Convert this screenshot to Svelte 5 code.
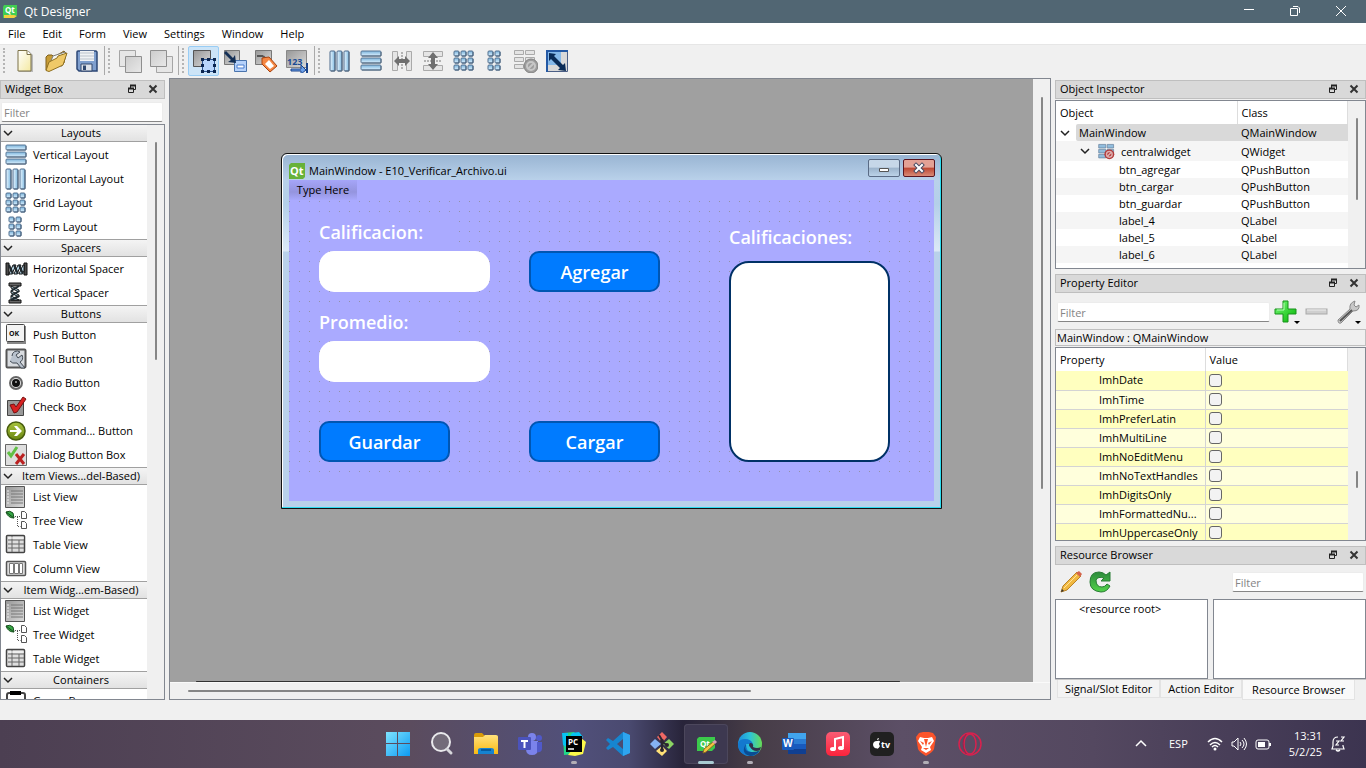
<script>
  const menus = ['File', 'Edit', 'Form', 'View', 'Settings', 'Window', 'Help'];

  const toolGroups = [
    [['new', 'New'], ['open', 'Open'], ['save', 'Save']],
    [['front', 'Bring to Front'], ['back', 'Send to Back']],
    [['widgets', 'Edit Widgets'], ['signals', 'Edit Signals/Slots'], ['buddies', 'Edit Buddies'], ['taborder', 'Edit Tab Order']],
    [['hlayout', 'Lay Out Horizontally'], ['vlayout', 'Lay Out Vertically'], ['hsplit', 'Horizontal Splitter'], ['vsplit', 'Vertical Splitter'],
     ['grid', 'Lay Out in a Grid'], ['form', 'Lay Out in a Form'], ['breaklayout', 'Break Layout'], ['adjust', 'Adjust Size']]
  ];

  const categories = [
    { name: 'Layouts', items: [['vlayout', 'Vertical Layout'], ['hlayout', 'Horizontal Layout'], ['grid', 'Grid Layout'], ['form', 'Form Layout']] },
    { name: 'Spacers', items: [['hspacer', 'Horizontal Spacer'], ['vspacer', 'Vertical Spacer']] },
    { name: 'Buttons', items: [['push', 'Push Button'], ['tool', 'Tool Button'], ['radio', 'Radio Button'], ['check', 'Check Box'], ['command', 'Command... Button'], ['dialog', 'Dialog Button Box']] },
    { name: 'Item Views...del-Based)', items: [['list', 'List View'], ['tree', 'Tree View'], ['table', 'Table View'], ['column', 'Column View']] },
    { name: 'Item Widg...em-Based)', items: [['list', 'List Widget'], ['tree', 'Tree Widget'], ['table', 'Table Widget']] },
    { name: 'Containers', items: [['group', 'Group Box']] }
  ];

  const objects = [
    ['btn_agregar', 'QPushButton'], ['btn_cargar', 'QPushButton'], ['btn_guardar', 'QPushButton'],
    ['label_4', 'QLabel'], ['label_5', 'QLabel'], ['label_6', 'QLabel'], ['txt_calificacion', 'QLineEdit']
  ];

  const properties = ['ImhDate', 'ImhTime', 'ImhPreferLatin', 'ImhMultiLine', 'ImhNoEditMenu', 'ImhNoTextHandles', 'ImhDigitsOnly', 'ImhFormattedNu...', 'ImhUppercaseOnly'];

  const apps = [
    ['windows', 'Start'], ['search', 'Search'], ['explorer', 'File Explorer'], ['teams', 'Teams'],
    ['pycharm', 'PyCharm', 'running'], ['vscode', 'VS Code'], ['git', 'Git'], ['designer', 'Qt Designer', 'current'],
    ['edge', 'Edge', 'running'], ['word', 'Word'], ['music', 'Music'], ['appletv', 'Apple TV'],
    ['brave', 'Brave', 'running'], ['opera', 'Opera GX']
  ];
</script>

{#snippet toolIcon(name)}
  <svg class="ico" viewBox="0 0 24 24" aria-hidden="true">
    {#if name === 'new'}
      <path d="M6 2h10l4 4v17H6z" fill="#b9b9b9" /><path d="M5 1.5h9l4 4V22H5z" fill="url(#paper)" stroke="#7b7146" />
      <path d="M14 1.5v4h4" fill="#fff" stroke="#7b7146" />
    {:else if name === 'open'}
      <path d="M2 21V8l2-2h4l2 2 10-6 2 2-2 10z" fill="#c79c36" stroke="#80601c" />
      <path d="M5 17 9 7l12-4 1 3-4 11z" fill="#f6f6f4" stroke="#7f7f78" />
      <path d="M2 21.5 5 13l8-4 1-2 9-3-4 12L5 22.5z" fill="#efc968" stroke="#90701f" />
    {:else if name === 'save'}
      <path d="M2 3q0-1 1-1h18l1 1v19H4l-2-2z" fill="#7f9fce" stroke="#2c4775" stroke-width="1.5" />
      <path d="M5 2h14v10H5z" fill="#f0f2f5" /><path d="M5 4h14M5 7h14M5 10h14" stroke="#bcc3cc" />
      <path d="M6 15h11v7H6z" fill="#dfe3ea" stroke="#32496f" /><path d="M8 16.500h3V21H8z" fill="#30486f" />
    {:else if name === 'front' || name === 'back'}
      <path d={name === 'front' ? 'M1.500 1.500h16v16h-16z' : 'M7.500 7.500h16v16h-16z'} fill="#e6e6e6" stroke="#a5a5a5" />
      <path d={name === 'front' ? 'M7.500 7.500h16v16h-16z' : 'M1.500 1.500h16v16h-16z'} fill="url(#grey)" stroke="#8f8f8f" />
    {:else if name === 'widgets'}
      <path d="M1.500 1.500h17v16h-17z" fill="url(#dgrey)" stroke="#555" /><path d="M10.500 10.500h12v12h-12z" fill="#b8d5fb" stroke="#2d5590" />
      <g fill="#0b254f"><path d="M9 9h3v3H9zM15 9h3v3h-3zM21 9h3v3h-3zM9 15h3v3H9zM21 15h3v3h-3zM9 21h3v3H9zM15 21h3v3h-3zM21 21h3v3h-3z" /></g>
    {:else if name === 'signals'}
      <path d="M1.500 1.500h15v14h-15z" fill="url(#dgrey)" stroke="#777" /><path d="M11.500 11.500h12v11h-12z" fill="#b5d1fa" stroke="#4a74ad" />
      <path d="M14 16h7v3h-7z" fill="#fff" stroke="#4a7ed0" /><path d="m1 4 2-2 7 7 2-3 1 8-8-1 3-2z" fill="#142f55" />
    {:else if name === 'buddies'}
      <path d="M1.500 1.500h16v14h-16z" fill="url(#dgrey)" stroke="#777" /><path d="M3 7h6m0 0 4 4" stroke="#555" stroke-width="2" />
      <path d="m8 9 7-1 8 9-7 6-8-8z" fill="#f58743" stroke="#a8420f" /><path d="m15 11 5 6-4 3-5-5z" fill="#fff" />
    {:else if name === 'taborder'}
      <path d="M1.500 1.500h20v17h-20z" fill="url(#dgrey)" stroke="#888" /><text x="2" y="16" class="num">123</text>
      <path d="M6 20h10v-4l5 5-5 4v-3H6z" fill="#6da1e9" stroke="#1a438a" /><path d="M22 14v10" stroke="#1a438a" stroke-width="2" />
    {:else if name === 'hlayout'}
      {#each [2, 9, 16] as x}<rect {x} y="2" width="5" height="20" rx="1" fill="url(#blueh)" stroke="#4c6a8d" /><path d="M{x + 5} 3v19h-4" fill="none" stroke="#52677c" />{/each}
    {:else if name === 'vlayout'}
      {#each [2, 9, 16] as y}<rect x="2" {y} width="20" height="5" rx="1" fill="url(#blue)" stroke="#5b7896" /><path d="M3 {y + 5}h19v-4" fill="none" stroke="#52677c" />{/each}
    {:else if name === 'grid' || name === 'form'}
      {#each (name === 'grid' ? [2, 9, 16] : [5, 12]) as x}{#each [2, 9, 16] as y}
        <rect {x} {y} width="5" height="5" rx="1" fill="url(#blue)" stroke="#52708f" /><path d="M{x + 1} {y + 5}h4v-4" fill="none" stroke="#455f7a" />
      {/each}{/each}
    {:else if name === 'hsplit'}
      <path d="M2.500 2.500h5v19h-5zM16.500 2.500h5v19h-5z" fill="#e5e5e5" stroke="#aaa" /><path d="M12 3v18" stroke="#777" stroke-dasharray="2 1" />
      <path d="m4 12 5-5v3h6V7l5 5-5 5v-3H9v3z" fill="#6f6f6f" />
    {:else if name === 'vsplit'}
      <path d="M2.500 2.500h19v5h-19zM2.500 16.500h19v5h-19z" fill="#e5e5e5" stroke="#aaa" /><path d="M3 12h18" stroke="#777" stroke-dasharray="2 1" />
      <path d="m12 3 5 6h-3v6h3l-5 6-5-6h3V9H7z" fill="#6f6f6f" />
    {:else if name === 'breaklayout'}
      {#each [1, 8, 15] as y}<path d="M.5 {y}.500h9v4h-9zM11.500 {y}.500h9v4h-9z" fill="#e4e4e4" stroke="#aaa" />{/each}
      <circle cx="17" cy="17" r="7" fill="#9d9d9d" stroke="#828282" /><circle cx="17" cy="17" r="4" fill="none" stroke="#c7c7c7" stroke-width="2" /><path d="m14 20 6-6" stroke="#c7c7c7" stroke-width="2" />
    {:else if name === 'adjust'}
      <path d="M1.500 1.500h21v21h-21z" fill="#d9d9d9" stroke="#4b5f86" /><path d="M2 2h14v14H2z" fill="#85b9ea" /><path d="M1 1h22v2H1zM1 1h2v22H1z" fill="#2459a4" />
      <path d="m4 4 7 1-2 2 9 9 2-2 1 8-8-1 2-2-9-9-2 2z" fill="#092b57" />
    {:else if name === 'hspacer'}
      <path d="M2 6h3v12H2zM20 6h3v12h-3z" fill="#4b4b4b" stroke="#111" /><path d="m5 17 4-9h3L8 17zm5 0 4-9h3l-4 9zm5 0 4-9h1v6l-2 3z" fill="#b8d8e8" stroke="#111" />
      <path d="m5 8 4 9m1-9 4 9m1-9 4 9" stroke="#202a30" stroke-width="2" />
    {:else if name === 'vspacer'}
      <path d="M5 2h12v3H5zM5 19h12v3H5z" fill="#666" stroke="#111" /><path d="m7 5 8 4v2L7 7zm0 5 8 4v2l-8-4zm0 5 8 4H7z" fill="#b8d8e8" stroke="#111" />
      <path d="m15 5-8 5m8 0-8 5m8 0-8 4" stroke="#202a30" stroke-width="2" />
    {:else if name === 'push'}
      <path d="M3 3h19v18H3z" fill="#888" /><rect x="2.500" y="1.500" width="18" height="17" rx="1" fill="#f3f3f3" stroke="#444" /><text x="5" y="13" class="ok">OK</text>
    {:else if name === 'tool'}
      <rect x="2.500" y="2.500" width="19" height="18" rx="1" fill="#d9dce0" stroke="#555" stroke-width="2" />
      <path d="M8 9a5 5 0 0 1 8-4l-4 3 2 3 4-3q2 5-2 7l5 6h-4l-4-5q-5 1-7-2" fill="#b9c2cd" stroke="#444c55" />
    {:else if name === 'radio'}
      <circle cx="12" cy="12" r="6" fill="#e2e2e2" stroke="#666" stroke-width="2" /><circle cx="12" cy="12" r="4" fill="#111" /><path d="M11 10h2v2h-2z" fill="#888" />
    {:else if name === 'check'}
      <path d="M3.500 5.500h16v15h-16z" fill="#999" stroke="#444" /><path d="m6 10 4-1 2 3 7-10 3 2-9 13-3 1z" fill="#d82222" stroke="#771111" />
    {:else if name === 'command'}
      <circle cx="12" cy="12" r="9" fill="url(#olive)" stroke="#485d0d" stroke-width="1.500" /><path d="M6 11h7l-3-4h3l5 5-5 5h-3l3-4H6z" fill="#fff" />
    {:else if name === 'dialog'}
      <path d="M1.500 1.500h21v21h-21z" fill="#dedede" stroke="#666" /><path d="m4 9 3 4 6-9" fill="none" stroke="#61bf45" stroke-width="3" />
      <path d="m12 11 8 10m0-10-8 10" stroke="#bb2222" stroke-width="3" />
    {:else if name === 'list'}
      <path d="M1.500 1.500h19v21h-19z" fill="url(#dgrey)" stroke="#555" /><path d="M7 6h12M7 9h12M7 12h12M7 15h12M7 18h12" stroke="#777" /><path d="M3 6h2M3 9h2M3 12h2M3 15h2M3 18h2" stroke="#eee" />
    {:else if name === 'tree'}
      <path d="M2 3q4-2 7 1l1 5q-6 0-8-6z" fill="#36a845" stroke="#174e1d" /><path d="m2 3 8 6" stroke="#174e1d" /><path d="M11 7.500h5M13.500 8v9.500h3" fill="none" stroke="#555" stroke-dasharray="1 1" />
      <path d="M17.500 2.500h3l2 2v5h-5zM17.500 12.500h3l2 2v5h-5z" fill="#fff" stroke="#555" />
    {:else if name === 'table'}
      <rect x="2.500" y="2.500" width="18" height="17" rx="1" fill="#dedede" stroke="#444" stroke-width="1.500" /><path d="M4 7h16M4 11h16M4 15h16M8 3v16M15 7v12" stroke="#666" /><path d="M4 5h16" stroke="#fff" />
    {:else if name === 'column'}
      <rect x="2.500" y="4.500" width="19" height="14" rx="1" fill="#ddd" stroke="#555" stroke-width="1.500" /><path d="M5.500 6.500h4v10h-4zM10.500 6.500h4v10h-4zM15.500 6.500h3v10h-3z" fill="#fff" stroke="#777" />
    {:else if name === 'group'}
      <rect x="3" y="4" width="18" height="18" rx="2" fill="#fff" stroke="#444" stroke-width="2" /><path d="M6 2h11v4H6z" fill="#000" />
    {:else if name === 'broken'}
      <path d="M1 2h10v5H1zM13 2h9v5h-9zM1 9h10v5H1zM13 9h9v5h-9zM1 16h10v5H1z" fill="#91bddd" stroke="#657f9c" />
      <circle cx="16" cy="16" r="7" fill="#b33b3b" /><circle cx="16" cy="16" r="4" fill="none" stroke="#deb0b0" stroke-width="2" /><path d="m13 19 6-6" stroke="#deb0b0" stroke-width="2" />
    {:else if name === 'plus'}
      <path d="M9 1h5v8h8v5h-8v8H9v-8H1V9h8z" fill="url(#green)" stroke="#17921b" /><path d="M10 3v7H3" fill="none" stroke="#b2ffb2" />
    {:else if name === 'minus'}
      <rect x="1" y="9" width="21" height="5" fill="#cfcfcf" stroke="#a9a9a9" /><path d="M2 10h19" stroke="#eee" />
    {:else if name === 'wrench'}
      <path d="M2 20 14 9q-1-6 5-8l-1 4 2 2 3-2q1 6-6 6L5 23q-3 1-3-3z" fill="#c8c8c8" stroke="#888" /><path d="m4 21 12-11" stroke="#555" stroke-width="2" />
    {:else if name === 'pencil'}
      <path d="m2 22 2-6L18 2l4 4L8 20z" fill="#f1b83f" stroke="#b98228" /><path d="m17 3 3-2 3 3-2 3z" fill="#d4644d" /><path d="m2 22 1-3 2 2z" fill="#333" /><path d="m5 18L18 5" stroke="#ffe39b" />
    {:else if name === 'reload'}
      <path d="M22 2v9h-9l3-3q-6-2-8 2 0 7 6 7 3 0 5-3l3 2q-3 6-9 6-11-1-11-10Q2 2 11 2q4 0 7 3z" fill="url(#green2)" stroke="#287c34" />
    {/if}
  </svg>
{/snippet}

{#snippet appIcon(name)}
  <svg class="app-ico" viewBox="0 0 24 24" aria-hidden="true">
    {#if name === 'windows'}
      <path d="M0 0h11v11H0zM12 0h12v11H12zM0 12h11v12H0zM12 12h12v12H12z" fill="url(#win)" />
    {:else if name === 'search'}
      <circle cx="11" cy="10" r="9" fill="#736b79" stroke="#e9e9ec" stroke-width="2" /><path d="m17 17 4 4" stroke="#d7d7db" stroke-width="3" stroke-linecap="round" />
    {:else if name === 'explorer'}
      <path d="M0 3q0-2 2-2h6l3 3h13v9H0z" fill="#d99b08" /><path d="M0 5h9l2-2h11q2 0 2 2v17H0z" fill="url(#folder)" /><path d="M4 22v-4q0-2 3-2h10q3 0 3 2v4z" fill="#1683cf" /><path d="M7 18h10" stroke="#075b9e" stroke-width="2" />
    {:else if name === 'teams'}
      <circle cx="14" cy="5" r="4" fill="#7b83eb" /><circle cx="21" cy="6" r="3" fill="#5059c9" /><path d="M8 9h12v8q0 6-6 6t-6-6z" fill="#7b83eb" /><path d="M19 10h5v7q-1 4-5 3z" fill="#5059c9" />
      <rect y="5" width="13" height="13" rx="1" fill="#4b53bc" /><path d="M3 9h7M6.500 9v7" stroke="#fff" stroke-width="2" />
    {:else if name === 'pycharm'}
      <path d="m1 1 11-1 5 5-4 17-11 1z" fill="#21d789" /><path d="m10 1 7-1 4 5-3 3-10-3z" fill="#07c3f2" /><path d="m19 6 5 4-3 12-8 2-7-1 6-8z" fill="#fcf84a" /><path d="m0 1 6 0v15l-5-3z" fill="#07c3f2" />
      <path d="M4 4h16v16H4z" fill="#000" /><text x="6" y="13" class="pc">PC</text><path d="M6 17h6" stroke="#fff" stroke-width="1.500" />
    {:else if name === 'vscode'}
      <path d="M17 0 7 9 2 6 0 8l4 4-4 4 2 2 5-3 10 9 7-3V3zM17 7v10l-6-5z" fill="#1685cf" fill-rule="evenodd" /><path d="m17 0 7 3v18l-7 3z" fill="#2ea5ef" />
    {:else if name === 'git'}
      <path d="m12 0 5 5-5 6-5-6z" fill="#ef6864" /><path d="m19 7 5 5-5 5-6-5z" fill="#8bd463" /><path d="m12 14 5 5-5 5-6-5z" fill="#ffe177" /><path d="m5 7 6 5-6 5-5-5z" fill="#85b2f3" />
      <path d="m9 3 3 5v11m0-9 5 3" fill="none" stroke="#2a2630" stroke-width="2" /><circle cx="12" cy="9" r="2" fill="#2a2630" /><circle cx="12" cy="18" r="2" fill="#2a2630" /><circle cx="17" cy="13" r="2" fill="#2a2630" />
    {:else if name === 'designer'}
      <path d="M5 5h16v11l-3 3H3V7z" fill="#3bca4b" /><text x="6" y="15" class="qt">Qt</text><path d="m9 21 1-4 9-7 2 2-9 8z" fill="#f5c442" stroke="#8a6b24" /><path d="m18 10 3-2 2 2-2 2z" fill="#d9a2b4" />
    {:else if name === 'edge'}
      <circle cx="12" cy="12" r="12" fill="url(#edge1)" /><path d="M0 12Q1 7 7 7t8 5H8q0 7 5 8t9-1Q18 24 12 24 0 23 0 12z" fill="#1379cf" /><path d="M8 12q-3 9 7 8 4 0 7-2-4 6-10 6Q2 21 8 12z" fill="#0b4c91" /><path d="M12 15q-2-2 0-4 4 0 3 4 4 2 8 0l-1 3q-6 3-10-3z" fill="#32304b" />
    {:else if name === 'word'}
      <path d="M6 1h18v6H6z" fill="#41a5ee" /><path d="M6 7h18v5H6z" fill="#2b7cd3" /><path d="M6 12h18v5H6z" fill="#185abd" /><path d="M6 17h18v5H6z" fill="#103f91" /><rect y="6" width="12" height="12" rx="1" fill="#185abd" /><text x="1" y="15" class="word">W</text>
    {:else if name === 'music'}
      <rect width="24" height="24" rx="5" fill="url(#music)" /><path d="M9 17V7l8-2v10" fill="none" stroke="#fff" stroke-width="2" /><ellipse cx="7" cy="17" rx="3" ry="2" fill="#fff" /><ellipse cx="15" cy="16" rx="3" ry="2" fill="#fff" />
    {:else if name === 'appletv'}
      <rect width="24" height="24" rx="5" fill="#202020" /><path d="M7 9q3-1 3 1-2 2 0 4-2 4-4 2-2 1-3-3 0-4 4-4zM7 8q0-2 2-2 0 2-2 2z" fill="#fff" /><text x="11" y="16" class="tv">tv</text>
    {:else if name === 'brave'}
      <path d="m5 1 4-1h6l4 1 3 4-2 12q-1 3-8 7-7-4-8-7L2 5z" fill="#fb542b" /><path d="m6 5 4 1h4l4-1 2 4-4 6 1 3-5 3-5-3 1-3-4-6z" fill="#fff" /><path d="m6 9 4 2-1 2zm12 0-4 2 1 2zM10 7h4l-2 8zM9 16h6l-3 2z" fill="#fb542b" />
    {:else if name === 'opera'}
      <circle cx="12" cy="12" r="11" fill="none" stroke="#d9214e" stroke-width="1.500" /><ellipse cx="12" cy="12" rx="6" ry="10" fill="none" stroke="#d9214e" stroke-width="1.500" /><path d="M8 2q-6 9 0 20" fill="none" stroke="#a51d49" />
    {/if}
  </svg>
{/snippet}

{#snippet dockTitle(title)}
  <header class="dock-title">
    <h2>{title}</h2>
    <button aria-label="Float {title}"><svg viewBox="0 0 10 10"><path d="M3.500 4V1.500h5v4H7M1.500 4.500h5v4h-5z" fill="none" stroke="#222" /><path d="M3 1.500h6M1 4.500h6" stroke="#222" stroke-width="2" /></svg></button>
    <button aria-label="Close {title}"><svg viewBox="0 0 10 10"><path d="m1.500 1.500 7 7m0-7-7 7" stroke="#333" stroke-width="2" /></svg></button>
  </header>
{/snippet}

{#snippet chevron()}
  <svg class="chevron" viewBox="0 0 10 10" aria-hidden="true"><path d="m1 3 4 4 4-4" fill="none" stroke="#222" stroke-width="1.500" /></svg>
{/snippet}

<svg class="defs" aria-hidden="true">
  <defs>
    <linearGradient id="paper" x2="1" y2="1"><stop stop-color="#fff" /><stop offset="1" stop-color="#f4e9a0" /></linearGradient>
    <linearGradient id="grey" x2="1" y2="1"><stop stop-color="#ccc" /><stop offset="1" stop-color="#e8e8e8" /></linearGradient>
    <linearGradient id="dgrey" x2="1" y2="1"><stop stop-color="#979797" /><stop offset="1" stop-color="#dadada" /></linearGradient>
    <linearGradient id="blue" x2="0" y2="1"><stop stop-color="#7ab3db" /><stop offset="1" stop-color="#def2ff" /></linearGradient>
    <linearGradient id="blueh" x2="1" y2="0"><stop stop-color="#eaf7ff" /><stop offset="1" stop-color="#7db8e0" /></linearGradient>
    <linearGradient id="olive" x2="0" y2="1"><stop stop-color="#a8c43f" /><stop offset="1" stop-color="#6b8512" /></linearGradient>
    <linearGradient id="green" x2="1" y2="1"><stop stop-color="#7dfb7d" /><stop offset="1" stop-color="#00b400" /></linearGradient>
    <linearGradient id="green2" x2="0" y2="1"><stop stop-color="#2c8a3c" /><stop offset="1" stop-color="#53d34b" /></linearGradient>
    <linearGradient id="win" x2="1" y2="1"><stop stop-color="#7fe4ff" /><stop offset="1" stop-color="#0c9af2" /></linearGradient>
    <linearGradient id="folder" x2="0" y2="1"><stop stop-color="#ffe17c" /><stop offset="1" stop-color="#f9b912" /></linearGradient>
    <linearGradient id="edge1" x2="1" y2="0"><stop stop-color="#1d8fdc" /><stop offset=".5" stop-color="#2dc3d8" /><stop offset="1" stop-color="#66dd54" /></linearGradient>
    <linearGradient id="music" x2="0" y2="1"><stop stop-color="#fb5c74" /><stop offset="1" stop-color="#fa233b" /></linearGradient>
  </defs>
</svg>

<div class="screen">
  <header class="titlebar">
    <svg class="qt-logo" viewBox="0 0 16 14" aria-hidden="true"><path d="M2 0h13v10l-3 3H1V2z" fill="#41cd52" /><text x="3" y="8" class="qt">Qt</text><path d="M2 10h10l3 1-3 2H2z" fill="#f3cf3d" /></svg>
    <h1>Qt Designer</h1>
    <div class="win-controls">
      <button aria-label="Minimize"><svg viewBox="0 0 12 12"><path d="M1 4.500h10" stroke="#fff" /></svg></button>
      <button aria-label="Restore"><svg viewBox="0 0 12 12"><path d="M1.500 3.500h7v7h-7zM4 1.500h5l1.500 1.500v5" fill="none" stroke="#fff" /></svg></button>
      <button aria-label="Close"><svg viewBox="0 0 12 12"><path d="m1 1 10 10m0-10L1 11" stroke="#fff" /></svg></button>
    </div>
  </header>

  <nav class="menubar">{#each menus as m}<button>{m}</button>{/each}</nav>

  <div class="toolbar">
    {#each toolGroups as group}
      <div class="tool-group">
        {#each group as [id, label]}
          <button aria-label={label} class:active={id === 'widgets'}>{@render toolIcon(id)}</button>
        {/each}
      </div>
    {/each}
  </div>

  <main>
    <aside class="dock left">
      {@render dockTitle('Widget Box')}
      <input class="filter" placeholder="Filter" aria-label="Filter widgets" />
      <div class="frame">
        <div class="widget-list">
          {#each categories as c}
            <h3>{@render chevron()}<span>{c.name}</span></h3>
            <ul>{#each c.items as [id, label]}<li>{@render toolIcon(id)}{label}</li>{/each}</ul>
          {/each}
        </div>
        <div class="vbar"><i style="top: 3%; height: 38%"></i></div>
      </div>
    </aside>

    <section class="workspace">
      <div class="mdi">
        <article class="form-window">
          <header>
            <svg viewBox="0 0 16 16" aria-hidden="true"><path d="M2 0h14v14l-2 2H0V2z" fill="#67b239" /><text x="1" y="12" class="qt big">Qt</text></svg>
            <h2>MainWindow - E10_Verificar_Archivo.ui</h2>
            <button class="min" aria-label="Minimize form"><svg viewBox="0 0 14 12"><path d="M2.500 6.500h9v3h-9z" fill="#fff" stroke="#555" /></svg></button>
            <button class="close" aria-label="Close form"><svg viewBox="0 0 14 12"><path d="m4 3 6 6m0-6L4 9" stroke="#4b4b61" stroke-width="4" stroke-linecap="square" /><path d="m4 3 6 6m0-6L4 9" stroke="#fff" stroke-width="2" stroke-linecap="square" /></svg></button>
          </header>
          <div class="canvas">
            <button class="type-here">Type Here</button>
            <svg class="dots" aria-hidden="true"><defs><pattern id="dot" width="10" height="10" patternUnits="userSpaceOnUse"><rect width="1" height="1" fill="#9292a8" /></pattern></defs><rect width="100%" height="100%" fill="url(#dot)" /></svg>
            <label class="w l1" for="calificacion">Calificacion:</label>
            <input class="w i1" id="calificacion" />
            <label class="w l2" for="promedio">Promedio:</label>
            <input class="w i2" id="promedio" />
            <button class="w b1">Agregar</button>
            <button class="w b2">Guardar</button>
            <button class="w b3">Cargar</button>
            <label class="w l3" for="lista">Calificaciones:</label>
            <textarea class="w list" id="lista"></textarea>
          </div>
        </article>
        <div class="next-window"></div>
      </div>
      <div class="vbar"><i style="top: 3%; height: 65%"></i></div>
      <div class="hbar"><i></i></div>
    </section>

    <div class="right">
      <aside class="dock inspector">
        {@render dockTitle('Object Inspector')}
        <div class="frame">
          <div class="scroll">
            <table class="objects">
              <colgroup><col class="c1" /><col /></colgroup>
              <thead><tr><th>Object</th><th>Class</th></tr></thead>
              <tbody>
                <tr class="root"><td><div>{@render chevron()}<span>MainWindow</span></div></td><td>QMainWindow</td></tr>
                <tr class="central"><td><div>{@render chevron()}{@render toolIcon('broken')}<span>centralwidget</span></div></td><td>QWidget</td></tr>
                {#each objects as [name, cls]}<tr><td class="leaf">{name}</td><td>{cls}</td></tr>{/each}
              </tbody>
            </table>
          </div>
          <div class="vbar"><i style="top: 10%; height: 49%"></i></div>
        </div>
      </aside>

      <aside class="dock editor">
        {@render dockTitle('Property Editor')}
        <div class="editor-tools">
          <input class="filter" placeholder="Filter" aria-label="Filter properties" />
          <button aria-label="Add dynamic property" class="drop">{@render toolIcon('plus')}</button>
          <button aria-label="Remove dynamic property">{@render toolIcon('minus')}</button>
          <button aria-label="Configure" class="drop">{@render toolIcon('wrench')}</button>
        </div>
        <p class="object-name">MainWindow : QMainWindow</p>
        <div class="frame">
          <div class="scroll">
            <table class="props">
              <colgroup><col class="c1" /><col /></colgroup>
              <thead><tr><th>Property</th><th>Value</th></tr></thead>
              <tbody>{#each properties as p}<tr><td><label for={p}>{p}</label></td><td><input type="checkbox" id={p} /></td></tr>{/each}</tbody>
            </table>
          </div>
          <div class="vbar"><i style="top: 64%; height: 9%"></i></div>
        </div>
      </aside>

      <aside class="dock resources">
        {@render dockTitle('Resource Browser')}
        <div class="resource-tools">
          <button aria-label="Edit Resources">{@render toolIcon('pencil')}</button>
          <button aria-label="Reload">{@render toolIcon('reload')}</button>
          <input class="filter" placeholder="Filter" aria-label="Filter resources" />
        </div>
        <div class="panes"><div>&lt;resource root&gt;</div><div></div></div>
        <div class="tabs"><button>Signal/Slot Editor</button><button>Action Editor</button><button class="current">Resource Browser</button></div>
      </aside>
    </div>
  </main>

  <footer class="taskbar">
    <div class="apps">
      {#each apps as [id, label, state]}<button class={state ?? ''} aria-label={label}>{@render appIcon(id)}</button>{/each}
    </div>
    <div class="tray">
      <svg viewBox="0 0 12 12" class="up"><path d="m1 8 5-5 5 5" fill="none" stroke="#fff" stroke-width="1.500" /></svg>
      <span class="lang">ESP</span>
      <svg viewBox="0 0 16 14"><path d="M1 5q7-7 14 0M3 8q5-5 10 0M5 10q3-3 6 0" fill="none" stroke="#fff" stroke-width="1.500" /><circle cx="8" cy="12" r="1.500" fill="#fff" /></svg>
      <svg viewBox="0 0 16 14"><path d="M1 5h2l4-4v12L3 9H1z" fill="none" stroke="#fff" /><path d="M9 5q2 2 0 4M11 3q4 4 0 8M13 1q5 6 0 12" fill="none" stroke="#fff" /></svg>
      <svg viewBox="0 0 16 14"><rect x="1" y="3" width="13" height="9" rx="2" fill="none" stroke="#fff" /><path d="M3 5h7v5H3zM14 6h2v3h-2z" fill="#fff" /></svg>
      <time>13:31<br />5/2/25</time>
      <svg viewBox="0 0 16 16" class="bell"><path d="M8 1Q3 1 3 6v4l-1 3h12l-1-3V9M6 14q2 2 4 0M6 5h3l-3 4h3M11 1h3l-3 4h3" fill="none" stroke="#fff" stroke-width="1.200" /></svg>
    </div>
  </footer>
</div>

<style>
  :global(body) { margin: 0; background: #f0f0f0; }
  .screen { display: flex; flex-direction: column; height: 100vh; min-height: 560px; overflow: hidden; background: #f0f0f0; color: #000; font: 11px/16px "Open Sans", "Noto Sans", sans-serif; }
  .screen * { box-sizing: border-box; }
  button, input, textarea { font: inherit; color: inherit; margin: 0; }
  button { padding: 0; border: 0; background: none; display: inline-flex; align-items: center; justify-content: center; }
  h1, h2, h3, p, ul { margin: 0; padding: 0; font-size: inherit; font-weight: 400; }
  .defs { position: absolute; width: 0; height: 0; }
  .ico, .app-ico { display: block; width: 24px; height: 24px; flex: none; }
  text { font-family: "Open Sans", sans-serif; font-weight: 700; fill: #fff; }
  .qt { font-size: 8px; }
  .qt.big { font-size: 11px; }
  .num { font-size: 9px; fill: #1c4b93; }
  .ok { font-size: 7px; fill: #111; }
  .pc, .tv { font-size: 8px; }
  .tv { font-size: 9px; }
  .word { font-size: 10px; }

  .titlebar { display: flex; align-items: center; height: 23px; flex: none; padding: 0 2px; background: #516673; color: #fff; }
  .qt-logo { width: 16px; height: 14px; margin-right: 6px; }
  .titlebar h1 { flex: 1; font-size: 12px; }
  .win-controls { display: flex; align-self: flex-start; }
  .win-controls button { width: 46px; height: 21px; }
  .win-controls svg { width: 12px; height: 12px; }
  .menubar { display: flex; flex: none; height: 21px; background: #fff; gap: 1px; }
  .menubar button { padding: 0 8px; }
  .toolbar { display: flex; flex: none; height: 34px; border-top: 1px solid #e6e6e6; padding: 1px 0 3px; }
  .tool-group { display: flex; align-items: center; position: relative; padding: 0 2px 0 9px; border-right: 1px solid #aaa; }
  .tool-group:last-child { border: 0; }
  .tool-group::before { content: ""; position: absolute; left: 3px; top: 2px; bottom: 2px; border-left: 2px dotted #b4b4b4; }
  .tool-group button { width: 31px; height: 30px; border: 1px solid transparent; border-radius: 2px; }
  .tool-group .active { background: #cce4f7; border-color: #99cdf5; }

  main { display: grid; grid-template-columns: 165px minmax(0, 1fr) 311px; gap: 4px; flex: 1; min-height: 0; padding-bottom: 20px; }
  .dock { display: flex; flex-direction: column; min-height: 0; min-width: 0; }
  .left { padding-top: 2px; }
  .dock-title { display: flex; align-items: center; flex: none; height: 19px; padding: 0 6px 1px 4px; background: #d9d9d9; border: 1px solid #bfbfbf; gap: 11px; }
  .dock-title h2 { flex: 1; }
  .dock-title button, .dock-title svg { width: 10px; height: 10px; }
  .filter { height: 20px; min-width: 0; padding: 0 2px; border: 1px solid #ececec; border-bottom-color: #868686; border-radius: 2px; background: #fff; outline: 0; }
  .filter::placeholder { color: #858585; opacity: 1; }
  .left .filter { margin: 3px 2px 2px 1px; flex: none; }
  .frame { display: flex; flex: 1; min-height: 0; overflow: hidden; border: 1px solid #828790; background: #fff; }
  .vbar { position: relative; flex: none; width: 17px; background: #f0f0f0; }
  .vbar i { position: absolute; left: 8px; width: 2px; background: #868686; border-radius: 1px; }
  .widget-list { flex: 1; min-width: 0; overflow: hidden; }
  .widget-list h3 { display: flex; align-items: center; height: 18px; border: solid #a0a0a0; border-width: 1px 0; background: linear-gradient(#f4f4f4, #e2e2e2); white-space: nowrap; }
  .widget-list h3:first-child { height: 17px; border-top: 0; margin-bottom: 1px; }
  .widget-list h3 span { flex: 1; text-align: center; }
  .chevron { width: 10px; height: 10px; margin: 0 2px; flex: none; }
  li { display: flex; align-items: center; gap: 5px; height: 24px; padding-left: 3px; list-style: none; white-space: nowrap; }

  .workspace { display: grid; grid-template: minmax(0, 1fr) 17px / minmax(0, 1fr) 17px; border: 1px solid #828790; min-height: 0; }
  .mdi { position: relative; overflow: hidden; background: #a0a0a0; }
  .hbar { position: relative; background: #f0f0f0; grid-column: 1 / -1; border-top: 1px solid #fafafa; }
  .hbar i { position: absolute; left: 2%; width: 64%; top: 7px; height: 2px; background: #868686; border-radius: 1px; }
  .next-window { position: absolute; left: 26px; width: 704px; bottom: 0; height: 1px; background: #333; border-radius: 1px; }
  .form-window { position: absolute; left: 111px; top: 74px; width: 661px; height: 356px; display: flex; flex-direction: column; padding: 0 7px 7px 7px; border: 1px solid #111; border-radius: 6px 6px 0 0; box-shadow: inset -1px -1px #2cdcf0, inset 1px 1px #fff; background: linear-gradient(#98b4d2, #b9d1ea 26px, #b4cfe9 50px, #dce9f6 97px, #b9d1ea 98px); }
  .form-window header { display: flex; align-items: center; flex: none; height: 26px; padding-top: 8px; gap: 4px; }
  .form-window header svg { width: 16px; height: 16px; flex: none; }
  .form-window h2 { flex: 1; }
  .form-window header button { width: 32px; height: 18px; margin: -6px -1px 0 0; border: 1px solid #5a6b85; border-radius: 2px; background: linear-gradient(#c6d7e8 45%, #9bb3cb 50%, #bcd2e8); }
  .form-window header button svg { width: 14px; height: 12px; }
  .form-window header .close { border-color: #5a1520; background: linear-gradient(#e3a195 45%, #bd4632 50%, #d98a76); }
  .canvas { position: relative; flex: 1; background: #aaaaff; color: #fff; font-size: 18px; font-weight: 600; line-height: 24px; }
  .type-here { display: block; width: 68px; height: 20px; background: linear-gradient(#a5a5f8, #9494de 60%, #a8a8fc); color: #000; font-size: 11px; line-height: 20px; font-weight: 400; }
  .dots { position: absolute; left: 0; top: 21px; width: 100%; height: 279px; }
  .w { position: absolute; margin: 0; }
  label.w { background: #aaaaff; height: 31px; width: 131px; }
  .l1 { left: 30px; top: 40px; }
  .l2 { left: 30px; top: 130px; }
  label.l3 { left: 440px; top: 45px; }
  input.w { left: 30px; width: 171px; height: 41px; padding: 0 12px; border: 0; border-radius: 15px; background: #fff; color: #000; }
  .i1 { top: 71px; }
  .i2 { top: 161px; }
  button.w { width: 131px; height: 41px; border: 2px solid #0056b3; border-radius: 10px; background: #007bff; }
  .b1 { left: 240px; top: 71px; }
  .b2 { left: 30px; top: 241px; }
  .b3 { left: 240px; top: 241px; }
  .list { left: 440px; top: 81px; width: 161px; height: 201px; resize: none; border: 2px solid #003166; border-radius: 20px; background: #fff; color: #000; }

  .right { display: flex; flex-direction: column; gap: 5px; min-height: 0; padding-top: 2px; }
  .inspector { flex: 189 1 0; }
  .editor { flex: 267 1 0; }
  .resources { flex: 154 1 0; }
  .inspector .frame { margin-top: 1px; }
  .scroll { flex: 1; min-width: 0; overflow: hidden; }
  table { width: 100%; border-collapse: collapse; table-layout: fixed; }
  th, td { padding: 0; text-align: left; font-weight: 400; white-space: nowrap; overflow: hidden; }
  th { height: 23px; padding-left: 4px; border-right: 1px solid #ddd; }
  td { height: 17px; padding-left: 3px; line-height: 17px; }
  .objects .c1 { width: 181px; }
  .objects td { padding-left: 4px; }
  .objects td:first-child { padding-left: 2px; }
  .objects tbody tr:nth-child(even) { background: #f5f5f5; }
  .objects td > div { display: flex; align-items: center; height: 17px; }
  .objects .root td:last-child, .root span { background: #d9d9d9; }
  .root span { flex: 1; padding-left: 3px; margin-left: 4px; border-radius: 2px 0 0 2px; }
  .central td { height: 20px; }
  .central td > div { height: 20px; padding-left: 20px; }
  .central .ico { width: 17px; height: 17px; margin: 0 6px; }
  .objects td.leaf { padding-left: 63px; }

  .editor-tools { display: flex; align-items: center; height: 36px; flex: none; padding: 2px 0 0 2px; }
  .editor-tools .filter { flex: 1; margin-right: 4px; }
  .editor-tools button { position: relative; width: 31px; height: 30px; justify-content: flex-start; }
  .editor-tools button:last-child { width: 30px; }
  .editor-tools .drop::after { content: ""; position: absolute; right: 5px; bottom: 3px; border: 3px solid transparent; border-top-color: #000; border-bottom: 0; }
  .object-name { flex: none; height: 17px; margin-bottom: 1px; padding-left: 1px; border: 1px solid #bfbfbf; line-height: 15px; }
  .props .c1 { width: 149px; }
  .props td { height: 19px; line-height: 18px; border: solid #d4d4d4; border-width: 0 1px 1px 0; }
  .props td:first-child { padding-left: 43px; }
  .props td:last-child { border-right: 0; }
  .props tr { background: #ffffdc; }
  .props tr:nth-child(odd) { background: #ffffbf; }
  thead tr, .props thead tr:nth-child(odd) { background: #fff; }
  input[type="checkbox"] { appearance: none; display: block; width: 13px; height: 13px; border: 1px solid #666; border-radius: 3px; background: #f3f3f3; }

  .resource-tools { display: flex; align-items: center; height: 34px; flex: none; padding: 0 2px 0 4px; gap: 5px; }
  .resource-tools .filter { width: 132px; margin-left: auto; }
  .panes { display: grid; grid-template-columns: 1fr 1fr; gap: 5px; flex: 1; min-height: 0; }
  .panes div { border: 1px solid #828790; background: #fff; padding: 1px 23px; }
  .tabs { display: flex; flex: none; height: 21px; align-items: flex-start; padding-left: 2px; border-top: 1px solid #c6c6c6; }
  .tabs button { height: 18px; padding: 0 7px; border: 1px solid #e3e3e3; border-top: 0; background: #f3f3f3; white-space: nowrap; }
  .tabs .current { height: 20px; padding: 0 9px; background: #f9f9f9; }

  .taskbar { position: relative; display: flex; align-items: center; justify-content: center; height: 48px; flex: none; color: #fff; background: linear-gradient(90deg, #4c3f52, #5b4c5e 30%, #51507a 42%, #4a4a70 46%, #28243a 50%, #463c46 55%, #5c4f66 66%, #544860 80%, #3c3450); }
  .apps { display: flex; padding-left: 2px; }
  .apps button { position: relative; width: 44px; height: 40px; }
  .apps .current { background: #3d3850; border-radius: 4px; box-shadow: inset 0 0 0 1px #4c475c; }
  .apps .running::after, .apps .current::after { content: ""; position: absolute; bottom: 0; left: 19px; width: 6px; height: 3px; border-radius: 2px; background: #b2aeb6; }
  .apps .current::after { left: 14px; width: 16px; background: #a9cbd2; }
  .tray { position: absolute; right: 20px; display: flex; align-items: center; gap: 8px; }
  .tray svg { width: 16px; height: 16px; }
  .tray .up { width: 12px; height: 12px; }
  .lang { margin: 0 11px 0 14px; }
  time { margin-left: 10px; text-align: right; }
</style>
